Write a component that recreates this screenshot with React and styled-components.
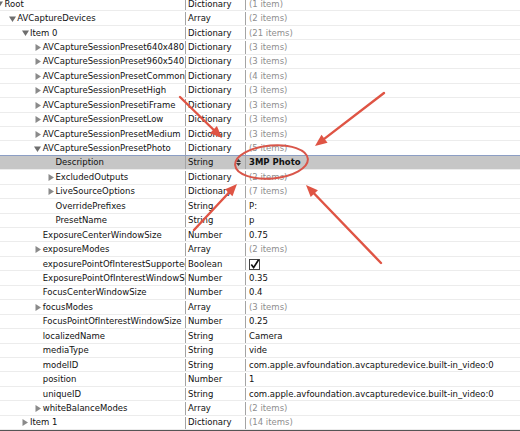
import React from "react";
import styled, { createGlobalStyle } from "styled-components";

const GlobalStyle = createGlobalStyle`
  html, body {
    margin: 0;
    padding: 0;
    background: #ffffff;
    overflow: hidden;
  }
  body {
    font-family: "DejaVu Sans", "Liberation Sans", sans-serif;
  }
`;

const ROW_H = 14.45;

const Page = styled.div`
  position: relative;
  width: 520px;
  height: 431px;
  overflow: hidden;
  background: #fff;
`;

const Outline = styled.div`
  margin-top: -3px;
  display: flex;
  flex-direction: column;
  border-bottom: 1px solid #555;
`;

const Row = styled.div`
  display: grid;
  grid-template-columns: 185px 60px 1fr;
  box-sizing: border-box;
  border-bottom: 1px solid #ececec;
  border-top: 1px solid ${({ $selected }) => ($selected ? "#8c9ec4" : "transparent")};
  margin-top: ${({ $selected }) => ($selected ? "-1px" : "0")};
  height: ${({ $selected }) => ($selected ? ROW_H + 1 : ROW_H)}px;
  background: ${({ $selected }) => ($selected ? "#c6c6c6" : "#fff")};
  font-size: 8.5px;
  line-height: 13px;
  color: #111;
`;

const KeyCell = styled.div`
  display: flex;
  align-items: center;
  padding-left: ${({ $level }) => 4.5 + $level * 12.75}px;
  overflow: hidden;
  white-space: nowrap;
`;

const Toggle = styled.span`
  display: inline-flex;
  align-items: center;
  justify-content: center;
  flex: none;
  width: 8px;
  margin-left: -9px;
  margin-right: 1px;
`;

const TypeCell = styled.div`
  display: flex;
  align-items: center;
  justify-content: space-between;
  padding-left: 2px;
  border-left: 1px solid #a4a4a4;
  overflow: hidden;
  white-space: nowrap;
`;

const ValueCell = styled.div`
  display: flex;
  align-items: center;
  padding-left: 3px;
  border-left: 1px solid #a4a4a4;
  overflow: hidden;
  white-space: nowrap;
  color: ${({ $muted }) => ($muted ? "#8e8e8e" : "#111")};
  font-weight: ${({ $strong }) => ($strong ? 600 : 400)};
`;

const Stepper = styled.span`
  display: flex;
  flex-direction: column;
  gap: 1px;
  margin-right: 4px;
`;

const Overlay = styled.svg`
  position: absolute;
  left: 0;
  top: 0;
  pointer-events: none;
`;

const rows = [
  { k: "Root", l: 0, d: "open", t: "Dictionary", v: "(1 item)", m: true },
  { k: "AVCaptureDevices", l: 1, d: "open", t: "Array", v: "(2 items)", m: true },
  { k: "Item 0", l: 2, d: "open", t: "Dictionary", v: "(21 items)", m: true },
  { k: "AVCaptureSessionPreset640x480", l: 3, d: "closed", t: "Dictionary", v: "(3 items)", m: true },
  { k: "AVCaptureSessionPreset960x540", l: 3, d: "closed", t: "Dictionary", v: "(3 items)", m: true },
  { k: "AVCaptureSessionPresetCommonFormat", l: 3, d: "closed", t: "Dictionary", v: "(4 items)", m: true },
  { k: "AVCaptureSessionPresetHigh", l: 3, d: "closed", t: "Dictionary", v: "(3 items)", m: true },
  { k: "AVCaptureSessionPresetiFrame", l: 3, d: "closed", t: "Dictionary", v: "(3 items)", m: true },
  { k: "AVCaptureSessionPresetLow", l: 3, d: "closed", t: "Dictionary", v: "(3 items)", m: true },
  { k: "AVCaptureSessionPresetMedium", l: 3, d: "closed", t: "Dictionary", v: "(3 items)", m: true },
  { k: "AVCaptureSessionPresetPhoto", l: 3, d: "open", t: "Dictionary", v: "(5 items)", m: true },
  { k: "Description", l: 4, t: "String", v: "3MP Photo", selected: true },
  { k: "ExcludedOutputs", l: 4, d: "closed", t: "Dictionary", v: "(2 items)", m: true },
  { k: "LiveSourceOptions", l: 4, d: "closed", t: "Dictionary", v: "(7 items)", m: true },
  { k: "OverridePrefixes", l: 4, t: "String", v: "P:" },
  { k: "PresetName", l: 4, t: "String", v: "p" },
  { k: "ExposureCenterWindowSize", l: 3, t: "Number", v: "0.75" },
  { k: "exposureModes", l: 3, d: "closed", t: "Array", v: "(2 items)", m: true },
  { k: "exposurePointOfInterestSupported", l: 3, t: "Boolean", check: true },
  { k: "ExposurePointOfInterestWindowSize", l: 3, t: "Number", v: "0.35" },
  { k: "FocusCenterWindowSize", l: 3, t: "Number", v: "0.4" },
  { k: "focusModes", l: 3, d: "closed", t: "Array", v: "(3 items)", m: true },
  { k: "FocusPointOfInterestWindowSize", l: 3, t: "Number", v: "0.25" },
  { k: "localizedName", l: 3, t: "String", v: "Camera" },
  { k: "mediaType", l: 3, t: "String", v: "vide" },
  { k: "modelID", l: 3, t: "String", v: "com.apple.avfoundation.avcapturedevice.built-in_video:0" },
  { k: "position", l: 3, t: "Number", v: "1" },
  { k: "uniqueID", l: 3, t: "String", v: "com.apple.avfoundation.avcapturedevice.built-in_video:0" },
  { k: "whiteBalanceModes", l: 3, d: "closed", t: "Array", v: "(2 items)", m: true },
  { k: "Item 1", l: 2, d: "closed", t: "Dictionary", v: "(14 items)", m: true },
];

function Disclosure({ state }) {
  if (!state) return <Toggle />;
  return (
    <Toggle>
      {state === "open" ? (
        <svg width="7" height="6" viewBox="0 0 7 6">
          <polygon points="0,0.5 7,0.5 3.5,6" fill="#6e6e6e" />
        </svg>
      ) : (
        <svg width="6" height="7" viewBox="0 0 6 7">
          <polygon points="0.5,0 6,3.5 0.5,7" fill="#8a8a8a" />
        </svg>
      )}
    </Toggle>
  );
}

function StepArrows() {
  return (
    <Stepper>
      <svg width="5" height="3" viewBox="0 0 5 3">
        <polygon points="0,3 5,3 2.5,0" fill="#333" />
      </svg>
      <svg width="5" height="3" viewBox="0 0 5 3">
        <polygon points="0,0 5,0 2.5,3" fill="#333" />
      </svg>
    </Stepper>
  );
}

function CheckBox() {
  return (
    <svg width="11" height="11" viewBox="0 0 11 11">
      <rect x="0.5" y="0.5" width="10" height="10" fill="#fff" stroke="#444" />
      <path d="M2.3 5.6 L4.6 8.6 L9.6 0.8" fill="none" stroke="#111" strokeWidth="1.7" />
    </svg>
  );
}

function Arrow({ from, to }) {
  const [x1, y1] = from;
  const [x2, y2] = to;
  const len = Math.hypot(x2 - x1, y2 - y1);
  const ux = (x2 - x1) / len;
  const uy = (y2 - y1) / len;
  const head = 12;
  const half = 5;
  const bx = x2 - ux * head;
  const by = y2 - uy * head;
  const pts = [
    [x2, y2],
    [bx - uy * half, by + ux * half],
    [bx + uy * half, by - ux * half],
  ]
    .map((p) => p.join(","))
    .join(" ");
  return (
    <g>
      <line x1={x1} y1={y1} x2={bx + ux * 2} y2={by + uy * 2} stroke="#df5444" strokeWidth="2.4" strokeLinecap="round" />
      <polygon points={pts} fill="#df5444" />
    </g>
  );
}

export default function App() {
  return (
    <Page>
      <GlobalStyle />
      <Outline>
        {rows.map((r, i) => (
          <Row key={i} $selected={r.selected}>
            <KeyCell $level={r.l}>
              <Disclosure state={r.d} />
              {r.k}
            </KeyCell>
            <TypeCell>
              {r.t}
              {r.selected && <StepArrows />}
            </TypeCell>
            <ValueCell $muted={r.m} $strong={r.selected}>
              {r.check ? <CheckBox /> : r.v}
            </ValueCell>
          </Row>
        ))}
      </Outline>
      <Overlay width="520" height="431" viewBox="0 0 520 431">
        <ellipse cx="271.5" cy="162" rx="36.5" ry="16.5" transform="rotate(-5 271.5 162)" fill="none" stroke="#d9564a" strokeWidth="2" />
        <Arrow from={[180, 97]} to={[222, 138]} />
        <Arrow from={[384, 93]} to={[315, 146]} />
        <Arrow from={[194, 230]} to={[237, 184]} />
        <Arrow from={[381, 263]} to={[306, 185]} />
      </Overlay>
    </Page>
  );
}
